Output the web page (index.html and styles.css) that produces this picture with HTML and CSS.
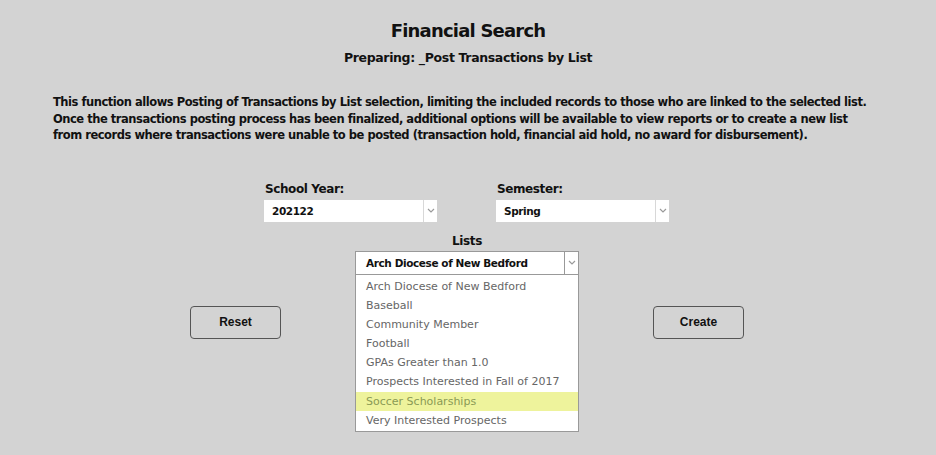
FILE: index.html
```html
<!DOCTYPE html>
<html>
<head>
<meta charset="utf-8">
<link rel="stylesheet" href="styles.css">
</head>
<body>
<div class="page">
  <h1 class="title">Financial Search</h1>
  <h2 class="subtitle">Preparing: _Post Transactions by List</h2>
  <p class="desc">This function allows Posting of Transactions by List selection, limiting the included records to those who are linked to the selected list.<br>Once the transactions posting process has been finalized, additional options will be available to view reports or to create a new list<br>from records where transactions were unable to be posted (transaction hold, financial aid hold, no award for disbursement).</p>

  <div class="fields">
    <div class="field">
      <label class="label">School Year:</label>
      <div class="select">
        <span class="select-value">202122</span>
        <span class="select-arrow"><svg width="8" height="5" viewBox="0 0 8 5"><path d="M1 1 L4 4 L7 1" fill="none" stroke="#9a9a9a" stroke-width="1.2"/></svg></span>
      </div>
    </div>
    <div class="field">
      <label class="label">Semester:</label>
      <div class="select">
        <span class="select-value">Spring</span>
        <span class="select-arrow"><svg width="8" height="5" viewBox="0 0 8 5"><path d="M1 1 L4 4 L7 1" fill="none" stroke="#9a9a9a" stroke-width="1.2"/></svg></span>
      </div>
    </div>
  </div>

  <div class="lists">
    <div class="lists-label">Lists</div>
    <div class="lists-wrap">
      <div class="select select-lists">
        <span class="select-value">Arch Diocese of New Bedford</span>
        <span class="select-arrow"><svg width="8" height="5" viewBox="0 0 8 5"><path d="M1 1 L4 4 L7 1" fill="none" stroke="#9a9a9a" stroke-width="1.2"/></svg></span>
      </div>
      <ul class="dropdown">
        <li>Arch Diocese of New Bedford</li>
        <li>Baseball</li>
        <li>Community Member</li>
        <li>Football</li>
        <li>GPAs Greater than 1.0</li>
        <li>Prospects Interested in Fall of 2017</li>
        <li class="hl">Soccer Scholarships</li>
        <li>Very Interested Prospects</li>
      </ul>
    </div>
  </div>

  <div class="buttons">
    <button class="btn">Reset</button>
    <button class="btn">Create</button>
  </div>
</div>
</body>
</html>
```
FILE: styles.css
```css
html, body {
  margin: 0;
  padding: 0;
  background: #d3d3d3;
}
body {
  font-family: "DejaVu Sans", sans-serif;
  color: #111;
  width: 936px;
  height: 455px;
  overflow: hidden;
}
.page {
  padding-top: 19px;
}
.title {
  margin: 0;
  text-align: center;
  font-size: 18px;
  letter-spacing: -0.8px;
  line-height: 24px;
  font-weight: bold;
}
.subtitle {
  margin: 6px 0 0;
  text-align: center;
  font-size: 12.5px;
  letter-spacing: -0.35px;
  line-height: 18px;
  font-weight: bold;
}
.desc {
  margin: 27px 0 0 53px;
  font-size: 11.5px;
  line-height: 16.5px;
  font-weight: bold;
  letter-spacing: -0.47px;
  white-space: nowrap;
}
.fields {
  margin-top: 37px;
  display: flex;
  justify-content: center;
  gap: 59px;
  padding-right: 3px;
}
.field {
  display: flex;
  flex-direction: column;
}
.label {
  font-size: 12px;
  letter-spacing: -0.4px;
  font-weight: bold;
  line-height: 16px;
  padding-left: 1px;
  margin-bottom: 3px;
}
.select {
  position: relative;
  width: 173px;
  height: 22px;
  background: #fff;
  display: flex;
  align-items: center;
  box-sizing: border-box;
}
.select-value {
  flex: 1;
  padding-left: 8px;
  font-size: 10.5px;
  letter-spacing: -0.4px;
  font-weight: bold;
}
.select-arrow {
  width: 13px;
  height: 100%;
  border-left: 1px solid #d8d8d8;
  display: flex;
  align-items: center;
  justify-content: center;
}
.lists {
  display: flex;
  flex-direction: column;
  align-items: center;
  margin-top: 11px;
  padding-right: 2px;
}
.lists-label {
  font-size: 12px;
  letter-spacing: -0.4px;
  font-weight: bold;
  line-height: 16px;
  margin-bottom: 2px;
}
.lists-wrap {
  position: relative;
  width: 224px;
}
.select-lists {
  width: 224px;
  height: 24px;
  border: 1px solid #999;
}
.select-lists .select-value {
  padding-left: 10px;
}
.select-lists .select-arrow {
  border-left: 1px solid #999;
}
.dropdown {
  position: absolute;
  left: 0;
  top: 23px;
  width: 224px;
  box-sizing: border-box;
  margin: 0;
  padding: 2px 0 1px;
  list-style: none;
  background: #fff;
  border: 1px solid #999;
  z-index: 2;
}
.dropdown li {
  height: 19.2px;
  line-height: 19px;
  padding-left: 10px;
  font-size: 11px;
  color: #666;
}
.dropdown li.hl {
  background: #eef39c;
  color: #8a9a55;
}
.buttons {
  margin-top: 31px;
  display: flex;
  justify-content: center;
  gap: 372px;
  padding-right: 2px;
}
.btn {
  width: 91px;
  height: 33px;
  background: transparent;
  border: 1px solid #555;
  border-radius: 4px;
  font-family: "Liberation Sans", Arial, sans-serif;
  font-weight: bold;
  font-size: 12px;
  color: #111;
}
```
